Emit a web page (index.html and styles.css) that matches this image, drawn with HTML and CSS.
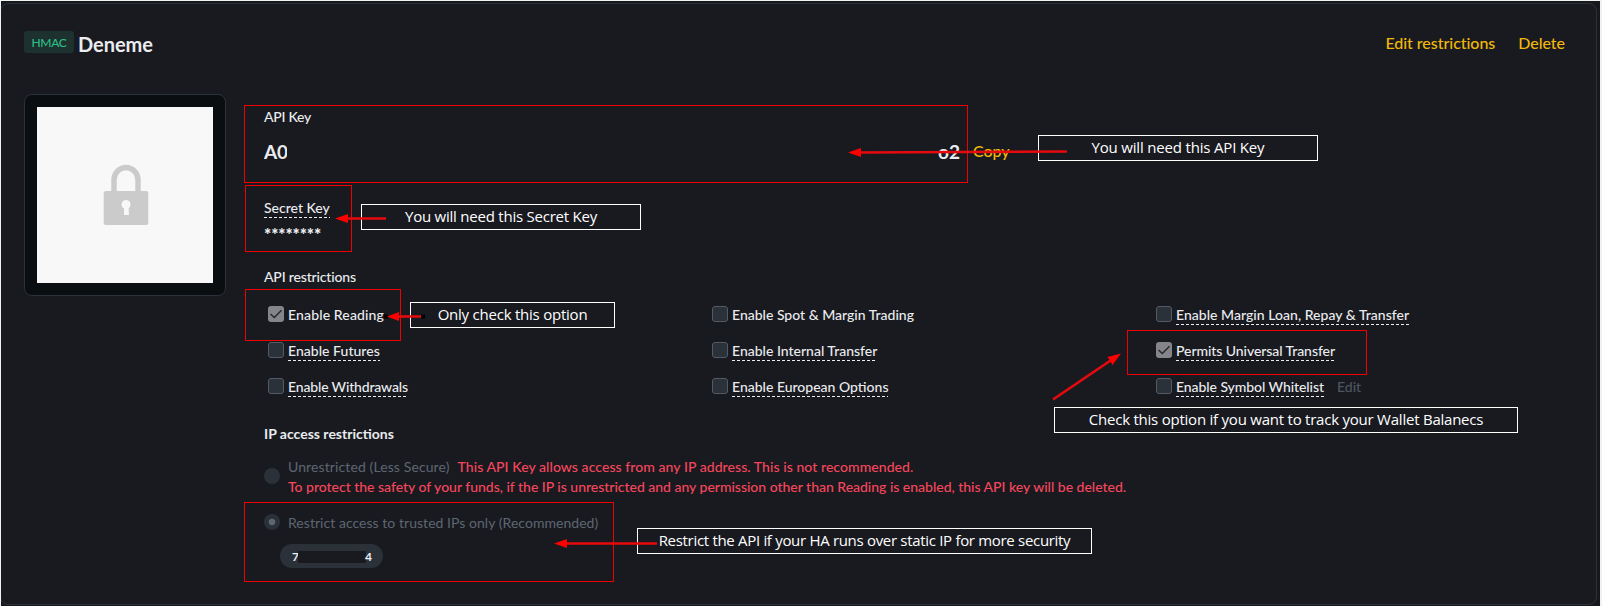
FILE: index.html
```html
<!DOCTYPE html>
<html lang="en">
<head>
<meta charset="utf-8">
<title>API Management</title>
<link rel="stylesheet" href="styles.css">
</head>
<body>
<div class="frame">
  <main class="card">
    <header class="head">
      <span class="tag">HMAC</span>
      <h1 class="name">Deneme</h1>
      <nav class="actions"><a>Edit restrictions</a><a>Delete</a></nav>
    </header>
    <div class="content">
      <div class="qr">
        <div class="qr-inner">
          <svg class="lock" width="46" height="62" viewBox="0 0 46 62">
            <path d="M11 29V16a12 12.5 0 0 1 24 0V29" fill="none" stroke="#cbcbcb" stroke-width="5.5"/>
            <rect x="0.7" y="27" width="44.6" height="34" rx="2" fill="#cbcbcb"/>
            <circle cx="23" cy="40.500" r="4.500" fill="#f8f8f8"/>
            <path d="M21 42h4.500l.5 9h-5z" fill="#f8f8f8"/>
          </svg>
        </div>
      </div>
      <section class="details">
        <div class="label key-label">API Key</div>
        <div class="key-row"><span class="key-start">A0</span><span class="key-end">o2</span><a class="copy">Copy</a></div>
        <div class="secret"><span class="label dashed">Secret Key</span></div>
        <div class="stars">********</div>
        <div class="label restr-title">API restrictions</div>
        <div class="grid">
          <div class="opt"><i class="box on"><svg width="16" height="16" viewBox="0 0 16 16"><path d="M2.500 8l3.800 3.600L13.500 4.300"/></svg></i><span class="wide">Enable Reading</span></div>
          <div class="opt"><i class="box"></i><span>Enable Spot &amp; Margin Trading</span></div>
          <div class="opt"><i class="box"></i><span class="dashed loan">Enable Margin Loan, Repay &amp; Transfer</span></div>
          <div class="opt"><i class="box"></i><span class="dashed loan">Enable Futures</span></div>
          <div class="opt"><i class="box"></i><span class="dashed">Enable Internal Transfer</span></div>
          <div class="opt"><i class="box on"><svg width="16" height="16" viewBox="0 0 16 16"><path d="M2.500 8l3.800 3.600L13.500 4.300"/></svg></i><span class="dashed snug">Permits Universal Transfer</span></div>
          <div class="opt"><i class="box"></i><span class="dashed tight">Enable Withdrawals</span></div>
          <div class="opt"><i class="box"></i><span class="dashed">Enable European Options</span></div>
          <div class="opt"><i class="box"></i><span class="dashed snug">Enable Symbol Whitelist</span><span class="edit">Edit</span></div>
        </div>
        <div class="ip-title">IP access restrictions</div>
        <div class="radio-row">
          <i class="radio mid"></i>
          <div>
            <div><span class="muted unrestricted">Unrestricted (Less Secure)</span><span class="warn first">This API Key allows access from any IP address. This is not recommended.</span></div>
            <div class="warn second">To protect the safety of your funds, if the IP is unrestricted and any permission other than Reading is enabled, this API key will be deleted.</div>
          </div>
        </div>
        <div class="radio-row trusted"><i class="radio checked"></i><span class="muted">Restrict access to trusted IPs only (Recommended)</span></div>
        <div class="pill"><span>7</span><i class="redact"></i><span>4</span></div>
      </section>
    </div>
  </main>

  <div class="mark m-key"></div>
  <div class="mark m-secret"></div>
  <div class="mark m-reading"></div>
  <div class="mark m-universal"></div>
  <div class="mark m-ip"></div>
  <div class="note n-key">You will need this API Key</div>
  <div class="note n-secret">You will need this Secret Key</div>
  <div class="note n-reading">Only check this option</div>
  <div class="note n-wallet">Check this option if you want to track your Wallet Balanecs</div>
  <div class="note n-ip">Restrict the API if your HA runs over static IP for more security</div>
  <svg class="arrows" width="1602" height="606" viewBox="0 0 1602 606">
    <path d="M384 314.500h4v4h-4zM421 314.500h4v4h-4z" fill="#000"/>
    <g stroke-width="2.600" stroke="#e60a0e">
      <path d="M858 152.500L1067 151.500M345 218.500H386M396 316.500H421M564 543.500H657M1053 399.500L1112 359.500"/>
    </g>
    <path fill="#f00" d="M848 152.500l13-4.500v9zM335 218.500l13-4.500v9zM387 316.500l12-4.500v9zM554 543.500l13-4.500v9zM1121 353.500l-8.500 11.500l-5-8z"/>
  </svg>
</div>
</body>
</html>
```

FILE: styles.css
```css
* { box-sizing: border-box; }
body {
  margin: 0;
  background: #f0f1f1;
  color: #eaecef;
  font: 500 14px/20px Lato, "Open Sans", sans-serif;
}
.frame {
  height: 606px;
  border: solid #f0f1f1;
  border-width: 1px 2px 0 1px;
  background: #16181c;
  overflow: hidden;
}
.card {
  width: 1597px;
  height: 602px;
  margin: 2px 0 0 -1px;
  border: 1px solid #2b3139;
  border-radius: 8px;
  background: #191a1f;
}
.head {
  display: flex;
  align-items: flex-start;
  height: 90px;
  padding: 27px 31px 0 23px;
}
.tag {
  width: 50px;
  height: 22px;
  border-radius: 3px;
  background: #1d312e;
  color: #2ebd85;
  font-size: 12px;
  font-weight: 500;
  line-height: 23px;
  letter-spacing: -0.3px;
  text-align: center;
}
.name {
  margin: 0 0 0 4px;
  font-size: 20px;
  font-weight: 700;
  line-height: 27px;
  letter-spacing: -0.05px;
}
.actions {
  display: flex;
  gap: 23px;
  margin-left: auto;
  color: #f0b90b;
  font-size: 16px;
  line-height: 24px;
  letter-spacing: -0.04px;
}
.content { display: flex; padding-left: 23px; }
.qr {
  flex: none;
  width: 202px;
  height: 202px;
  padding: 12px;
  border: 1px solid #2b3139;
  border-radius: 8px;
  background: #0b0e11;
}
.qr-inner {
  height: 176px;
  padding: 57px 0 0 66px;
  background: #f8f8f8;
}
.lock { display: block; filter: blur(0.6px); }
.details { flex: 1; padding: 13px 0 0 38px; }
.key-label { letter-spacing: -0.25px; }
.key-row {
  display: flex;
  align-items: baseline;
  height: 28px;
  margin: 10px 0 33px;
  font-size: 19px;
  font-weight: 700;
  line-height: 30px;
}
.key-start { width: 23px; letter-spacing: -0.3px; overflow: clip; }
.key-end { margin-left: 651px; }
.copy {
  margin-left: 13px;
  color: #f0b90b;
  font-size: 16px;
  font-weight: 500;
  position: relative;
  top: -2px;
}
.secret { display: flex; }
.dashed {
  background: repeating-linear-gradient(90deg, #eaecef 0 3px, transparent 3px 5px) left bottom / 100% 1px no-repeat;
}
.stars {
  height: 20px;
  margin: 7px 0 22px;
  font-size: 17px;
  font-weight: 900;
  line-height: 20px;
  letter-spacing: -0.1px;
}
.restr-title { letter-spacing: -0.17px; }
.grid {
  display: grid;
  grid-template-columns: repeat(3, 444px);
  grid-auto-rows: 36px;
  margin: 18px 0 0 4px;
}
.opt { display: flex; align-items: flex-start; }
.wide { letter-spacing: 0.14px; }
.loan { letter-spacing: 0.03px; }
.snug { letter-spacing: -0.07px; }
.tight { letter-spacing: -0.16px; }
.box {
  width: 16px;
  height: 16px;
  margin: 1px 4px 0 0;
  border: 1px solid #535b67;
  border-radius: 3px;
  background: #2b3139;
}
.box.on { border: 0; background: #848489; }
.box svg { display: block; fill: none; stroke: #25272c; stroke-width: 1.4; }
.edit { margin-left: 13px; color: #4f5661; }
.ip-title { margin-top: 11px; font-weight: 700; }
.radio-row { display: flex; margin-top: 13px; }
.radio {
  flex: none;
  width: 16px;
  height: 16px;
  margin: 1px 8px 0 0;
  border-radius: 50%;
  background: #2b3139;
}
.radio.mid { margin-top: 11px; }
.radio.checked { background: radial-gradient(circle, #5e6673 3px, #2b3139 3.6px); }
.muted { color: #5e6673; font-weight: 400; letter-spacing: 0.04px; }
.unrestricted { margin-right: 8px; letter-spacing: 0.11px; }
.warn { color: #f6465d; }
.warn.first { letter-spacing: 0.065px; }
.warn.second { letter-spacing: -0.015px; }
.trusted { margin-top: 16px; }
.pill {
  display: flex;
  align-items: center;
  width: 103px;
  height: 24px;
  margin: 11px 0 0 16px;
  padding: 1px 11px 0 12px;
  border-radius: 12px;
  background: #2b3139;
  font-size: 12px;
  font-weight: 700;
}
.redact { width: 68px; height: 12px; margin: 0 -1px; background: #191a1f; }

/* Annotations laid over the card */
.mark { position: absolute; border: 1px solid #f00000; }
.m-key { left: 244px; top: 105px; width: 724px; height: 78px; }
.m-secret { left: 245px; top: 185px; width: 107px; height: 67px; }
.m-reading { left: 245px; top: 289px; width: 156px; height: 52px; }
.m-universal { left: 1127px; top: 330px; width: 240px; height: 45px; }
.m-ip { left: 244px; top: 502px; width: 370px; height: 80px; }
.note {
  position: absolute;
  height: 26px;
  border: 1px solid #fff;
  color: #fff;
  font: 400 15px/22px "Open Sans", "Noto Sans", sans-serif;
  letter-spacing: -0.23px;
  text-align: center;
  white-space: nowrap;
}
.n-key { left: 1038px; top: 135px; width: 280px; letter-spacing: -0.18px; }
.n-secret { left: 361px; top: 204px; width: 280px; }
.n-reading { left: 410px; top: 302px; width: 205px; }
.n-wallet { left: 1054px; top: 407px; width: 464px; }
.n-ip { left: 637px; top: 528px; width: 455px; letter-spacing: -0.31px; }
.arrows { position: absolute; left: 0; top: 0; }
```
